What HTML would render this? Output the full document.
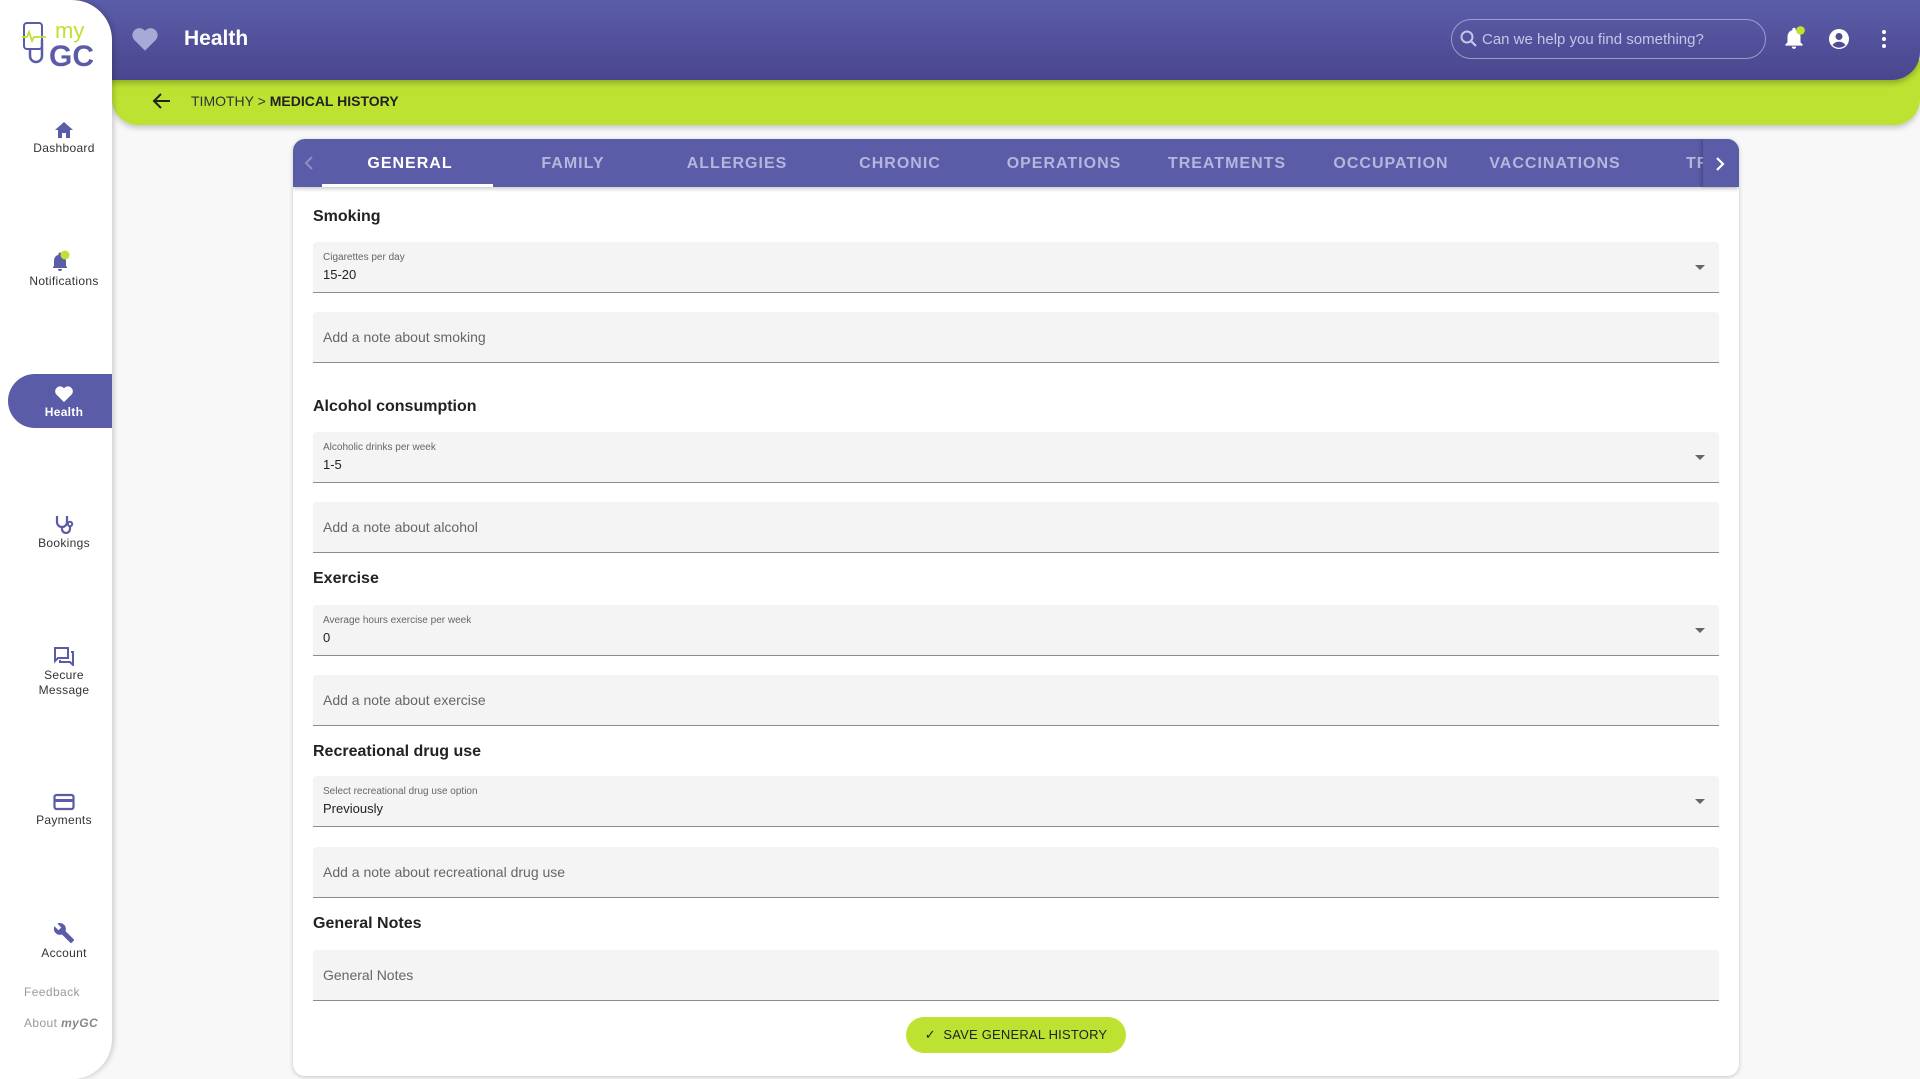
<!DOCTYPE html>
<html><head><meta charset="utf-8"><style>
*{box-sizing:border-box;margin:0;padding:0}
body{width:1920px;height:1079px;overflow:hidden;background:#f8f8f8;font-family:"Liberation Sans",sans-serif;position:relative}
.abs{position:absolute}
#hdr{left:60px;top:0;width:1860px;height:80px;background:linear-gradient(#5b5da9,#4a458e);border-bottom-right-radius:28px;box-shadow:0 3px 6px rgba(0,0,0,.25);z-index:3}
#grn{left:112px;top:60px;width:1808px;height:65px;background:#bde232;border-bottom-right-radius:26px;border-bottom-left-radius:26px;box-shadow:0 3px 6px rgba(0,0,0,.2);z-index:2}
#side{left:0;top:0;width:112px;height:1079px;background:#fff;border-top-right-radius:40px;border-bottom-right-radius:40px;box-shadow:2px 0 6px rgba(0,0,0,.18);z-index:5}
.nav{position:absolute;left:4px;width:120px;text-align:center;font-size:12px;color:#333;letter-spacing:.3px}
.nav svg{display:block;margin:0 auto 2px}
#card{left:293px;top:139px;width:1446px;height:937px;background:#fff;border-radius:12px;box-shadow:0 1px 5px rgba(0,0,0,.2);overflow:hidden}
#tabs{left:0;top:0;width:1446px;height:48px;background:#5a5ca8;box-shadow:0 2px 4px rgba(0,0,0,.2)}
.tab{position:absolute;top:0;height:48px;line-height:50px;width:164px;text-align:center;font-size:16px;font-weight:bold;letter-spacing:1px;color:#b5b6dc}
.h{position:absolute;left:20px;font-size:16px;font-weight:bold;color:#222}
.f{position:absolute;left:20px;width:1406px;height:51px;background:#f4f4f4;border-radius:4px 4px 0 0;border-bottom:1.5px solid #8c8c8c}
.f .l{position:absolute;left:10px;top:10px;font-size:10px;color:#666}
.f .v{position:absolute;left:10px;top:25px;font-size:13px;color:#222}
.f .p{position:absolute;left:10px;top:17px;font-size:14px;color:#666}
.f .a{position:absolute;right:14px;top:23px;width:0;height:0;border-left:5px solid transparent;border-right:5px solid transparent;border-top:5px solid #666}
</style></head><body>
<div id="hdr" class="abs">
 <svg class="abs" style="left:71px;top:26px" width="28" height="26" viewBox="0 0 24 22"><path d="M12 21 L2.5 11.5 A5.5 5.5 0 0 1 12 4 A5.5 5.5 0 0 1 21.5 11.5 Z" fill="#a7a9d6"/></svg>
 <div class="abs" style="left:124px;top:27px;font-size:21px;font-weight:bold;color:#fff">Health</div>
 <div class="abs" style="left:1391px;top:19px;width:315px;height:40px;border:1px solid #9c9dcd;border-radius:20px"></div>
 <svg class="abs" style="left:1399px;top:29px" width="20" height="20" viewBox="0 0 20 20"><circle cx="8" cy="8" r="5.5" fill="none" stroke="#c5c6e6" stroke-width="2"/><path d="M12 12 L17 17" stroke="#c5c6e6" stroke-width="2.2"/></svg>
 <div class="abs" style="left:1422px;top:31px;font-size:15px;color:#c5c6e6">Can we help you find something?</div>
 <svg class="abs" style="left:1721px;top:25px" width="26" height="26" viewBox="0 0 24 24"><path d="M12 22a2 2 0 0 0 2-2h-4a2 2 0 0 0 2 2zm6-6v-5c0-3-1.6-5.6-4.5-6.3V4a1.5 1.5 0 0 0-3 0v.7C7.6 5.4 6 8 6 11v5l-2 2v1h16v-1z" fill="#fff"/><circle cx="18" cy="5" r="4" fill="#bde232"/></svg>
 <svg class="abs" style="left:1767px;top:27px" width="24" height="24" viewBox="0 0 24 24"><circle cx="12" cy="12" r="10" fill="#fff"/><circle cx="12" cy="9.5" r="3.5" fill="#4f4b97"/><path d="M5.5 18a8 8 0 0 1 13 0 9 9 0 0 1-13 0z" fill="#4f4b97"/></svg>
 <svg class="abs" style="left:1814px;top:27px" width="20" height="24" viewBox="0 0 20 24"><circle cx="10" cy="5" r="2" fill="#fff"/><circle cx="10" cy="12" r="2" fill="#fff"/><circle cx="10" cy="19" r="2" fill="#fff"/></svg>
</div>
<div id="grn" class="abs">
 <svg class="abs" style="left:40px;top:32px" width="20" height="18" viewBox="0 0 20 18"><path d="M18 9H3M9 2L2 9l7 7" fill="none" stroke="#222" stroke-width="2"/></svg>
 <div class="abs" style="left:79px;top:33px;font-size:14px;color:#333">TIMOTHY &gt; <b style="color:#222">MEDICAL HISTORY</b></div>
</div>
<div id="side" class="abs">
 <svg class="abs" style="left:22px;top:20px" width="78" height="48" viewBox="0 0 78 48">
  <rect x="2" y="3" width="18" height="26" rx="3" fill="none" stroke="#5a5ca8" stroke-width="2"/>
  <path d="M8 28v8a6 6 0 0 0 12 0V20" fill="none" stroke="#5a5ca8" stroke-width="2.5"/>
  <path d="M0 17h5l2-5 3 9 2-4h12" fill="none" stroke="#bde232" stroke-width="1.8"/>
  <text x="33" y="18" font-family="Liberation Sans" font-size="22" fill="#bde232">my</text>
  <text x="27" y="46" font-family="Liberation Sans" font-size="30" font-weight="bold" fill="#5a5ca8">GC</text>
 </svg>
 <div class="nav" style="top:121px"><svg width="20" height="18" viewBox="0 0 20 18"><path d="M10 1L1 9h3v8h4v-5h4v5h4V9h3z" fill="#5a5ca8"/></svg>Dashboard</div>
 <div class="nav" style="top:250px"><svg width="26" height="22" viewBox="0 0 26 22"><path d="M9 21a2 2 0 0 0 2-2H7a2 2 0 0 0 2 2zm6-5v-5c0-3-1.6-5.5-4.5-6.2V4a1.5 1.5 0 0 0-3 0v.8C4.6 5.5 3 8 3 11v5l-1 1v1h14v-1z" fill="#5a5ca8"/><circle cx="14" cy="5" r="4.5" fill="#bde232"/></svg>Notifications</div>
 <div class="abs" style="left:8px;top:374px;width:104px;height:54px;background:#5a5ca8;border-radius:27px 0 0 27px"></div>
 <div class="nav" style="top:385px;color:#fff;font-weight:bold;font-size:12px"><svg width="20" height="18" viewBox="0 0 24 22"><path d="M12 21 L2.5 11.5 A5.5 5.5 0 0 1 12 4 A5.5 5.5 0 0 1 21.5 11.5 Z" fill="#fff"/></svg>Health</div>
 <div class="nav" style="top:514px"><svg width="22" height="20" viewBox="0 0 22 20"><path d="M4 2v6a5 5 0 0 0 10 0V2M9 13v2a4 4 0 0 0 8 0v-3" fill="none" stroke="#5a5ca8" stroke-width="2.2"/><circle cx="17" cy="10" r="2.2" fill="none" stroke="#5a5ca8" stroke-width="2"/></svg>Bookings</div>
 <div class="nav" style="top:646px;line-height:15px"><svg width="22" height="20" viewBox="0 0 22 20"><path d="M2 2h13v10H5l-3 3z" fill="none" stroke="#5a5ca8" stroke-width="2"/><path d="M18 6h2v13l-3-3H7v-2" fill="none" stroke="#5a5ca8" stroke-width="2"/></svg>Secure<br>Message</div>
 <div class="nav" style="top:793px"><svg width="22" height="18" viewBox="0 0 22 18"><rect x="1.5" y="2" width="19" height="14" rx="2" fill="none" stroke="#5a5ca8" stroke-width="2.2"/><rect x="1.5" y="6" width="19" height="3" fill="#5a5ca8"/></svg>Payments</div>
 <div class="nav" style="top:922px"><svg width="22" height="22" viewBox="0 0 24 24"><path d="M22.7 19l-9.1-9.1c.9-2.3.4-5-1.5-6.9-2-2-5-2.4-7.4-1.3L9 6 6 9 1.6 4.7C.4 7.1.9 10.1 2.9 12.1c1.9 1.9 4.6 2.4 6.9 1.5l9.1 9.1c.4.4 1 .4 1.4 0l2.3-2.3c.5-.4.5-1.1.1-1.4z" fill="#5a5ca8"/></svg>Account</div>
 <div class="abs" style="left:24px;top:985px;font-size:12px;color:#999;letter-spacing:.4px">Feedback</div>
 <div class="abs" style="left:24px;top:1016px;font-size:12px;color:#999;letter-spacing:.4px">About <i style="font-weight:bold;color:#888">myGC</i></div>
</div>
<div id="card" class="abs">
 <div id="tabs" class="abs">
  <svg class="abs" style="left:10px;top:16px" width="12" height="16" viewBox="0 0 12 16"><path d="M9 2L3 8l6 6" fill="none" stroke="#8d8fc4" stroke-width="2"/></svg>
  <div class="tab" style="left:35px;color:#fff">GENERAL</div>
  <div class="abs" style="left:29px;top:45px;width:171px;height:3px;background:#fff"></div>
  <div class="tab" style="left:198px">FAMILY</div>
  <div class="tab" style="left:362px">ALLERGIES</div>
  <div class="tab" style="left:525px">CHRONIC</div>
  <div class="tab" style="left:689px">OPERATIONS</div>
  <div class="tab" style="left:852px">TREATMENTS</div>
  <div class="tab" style="left:1016px">OCCUPATION</div>
  <div class="tab" style="left:1180px">VACCINATIONS</div>
  <div class="tab" style="left:1393px;width:40px;text-align:left">TR</div>
  <div class="abs" style="left:1410px;top:0;width:36px;height:48px;background:#5a5ca8;box-shadow:-2px 0 3px rgba(0,0,0,.2)"></div>
  <svg class="abs" style="left:1421px;top:17px" width="12" height="16" viewBox="0 0 12 16"><path d="M3 2l6 6-6 6" fill="none" stroke="#fff" stroke-width="2.2"/></svg>
 </div>
 <div class="h" style="top:69px">Smoking</div>
 <div class="f" style="top:103px"><div class="l">Cigarettes per day</div><div class="v">15-20</div><div class="a"></div></div>
 <div class="f" style="top:173px"><div class="p">Add a note about smoking</div></div>
 <div class="h" style="top:259px">Alcohol consumption</div>
 <div class="f" style="top:293px"><div class="l">Alcoholic drinks per week</div><div class="v">1-5</div><div class="a"></div></div>
 <div class="f" style="top:363px"><div class="p">Add a note about alcohol</div></div>
 <div class="h" style="top:431px">Exercise</div>
 <div class="f" style="top:466px"><div class="l">Average hours exercise per week</div><div class="v">0</div><div class="a"></div></div>
 <div class="f" style="top:536px"><div class="p">Add a note about exercise</div></div>
 <div class="h" style="top:604px">Recreational drug use</div>
 <div class="f" style="top:637px"><div class="l">Select recreational drug use option</div><div class="v">Previously</div><div class="a"></div></div>
 <div class="f" style="top:708px"><div class="p">Add a note about recreational drug use</div></div>
 <div class="h" style="top:776px">General Notes</div>
 <div class="f" style="top:811px"><div class="p">General Notes</div></div>
 <div class="abs" style="left:613px;top:878px;width:220px;height:36px;background:#bde232;border-radius:18px;font-size:13px;color:#222;line-height:36px;text-align:center;letter-spacing:.2px">✓&nbsp; SAVE GENERAL HISTORY</div>
</div>
</body></html>
